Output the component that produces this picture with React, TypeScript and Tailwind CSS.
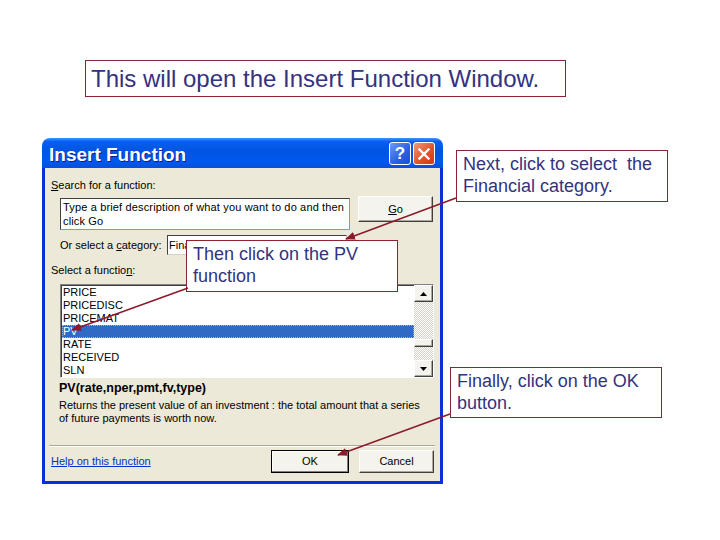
import React from 'react';

const items = ['PRICE', 'PRICEDISC', 'PRICEMAT', 'PV', 'RATE', 'RECEIVED', 'SLN'];

function Callout({ className, children }: { className: string; children: React.ReactNode }) {
  return (
    <div
      className={`absolute bg-white border border-[#8b2332] text-[#33337f] text-[18px] leading-[22px] pl-[6px] pt-[2px] whitespace-pre font-['Liberation_Sans',Arial,sans-serif] ${className}`}
    >
      {children}
    </div>
  );
}

function Btn({ className, children, def }: { className: string; children: React.ReactNode; def?: boolean }) {
  return (
    <div
      className={`flex items-center justify-center bg-[#f4f3ee] text-[11px] text-black ${
        def
          ? 'border border-black shadow-[inset_-1px_-1px_0_#808080,inset_1px_1px_0_#fff]'
          : 'border border-t-white border-l-white border-r-[#404040] border-b-[#404040] shadow-[inset_-1px_-1px_0_#aca899]'
      } ${className}`}
    >
      {children}
    </div>
  );
}

export default function App() {
  return (
    <div className="relative w-[720px] h-[540px] bg-white overflow-hidden font-['Liberation_Sans',Arial,sans-serif]">
      {/* slide caption */}
      <div className="pt-[60px] pl-[85px]">
        <div className="w-[481px] h-[37px] border border-[#8b2332] text-[#33337f] text-[24px] leading-[35px] pl-[5px]">
          This will open the Insert Function Window.
        </div>
      </div>

      {/* Insert Function dialog */}
      <div className="mt-[41px] ml-[42px] w-[401px] rounded-t-[8px] overflow-hidden">
        <div className="h-[30px] flex items-center pl-[7px] pr-[8px] bg-[linear-gradient(to_bottom,#3d95ff_0%,#0a5ef0_12%,#0054e3_45%,#0058ee_80%,#0b4fd8_100%)]">
          <span className="pt-[4px] text-white font-bold text-[19px] [text-shadow:1px_1px_0_#0a1e8c]">
            Insert Function
          </span>
          <div className="ml-auto flex gap-[2px] mt-[1px]">
            <div className="w-[22px] h-[23px] rounded-[3px] border border-white bg-[linear-gradient(135deg,#6a9cf5,#2a5fe0_60%,#1d4fd0)] flex items-center justify-center text-white font-bold text-[17px]">
              ?
            </div>
            <div className="w-[22px] h-[23px] rounded-[3px] border border-white bg-[linear-gradient(135deg,#f09a7e,#e2542a_55%,#cc3a12)] flex items-center justify-center">
              <svg width="12" height="12" viewBox="0 0 12 12">
                <path d="M1.5 1.5 L10.5 10.5 M10.5 1.5 L1.5 10.5" stroke="white" strokeWidth="2.4" strokeLinecap="square" />
              </svg>
            </div>
          </div>
        </div>

        <div className="h-[316px] bg-[#ece9d8] border-x-[3px] border-b-[3px] border-[#0831d9] flex flex-col text-[11px] text-black">
          <div className="mt-[11px] ml-[6px] h-[13px] leading-[13px]">
            <u>S</u>earch for a function:
          </div>

          <div className="mt-[4px] ml-[15px] flex items-start">
            <div className="mt-[2px] w-[290px] h-[32px] bg-white border border-[#7f9db9] border-t-[#404040] border-l-[#404040] pl-[2px] pt-[1px] leading-[14px] tracking-[0.15px]">
              Type a brief description of what you want to do and then
              <br />
              click Go
            </div>
            <Btn className="ml-[8px] w-[75px] h-[26px]">
              <u>G</u>o
            </Btn>
          </div>

          <div className="mt-[5px] ml-[15px] h-[20px] flex items-center">
            <span className="w-[107px]">
              Or select a <u>c</u>ategory:
            </span>
            <div className="w-[180px] h-[20px] bg-white border border-[#404040] border-r-[#d4d0c8] border-b-[#d4d0c8] flex items-center pl-[1px]">
              {/* the rest of the category name lies under the callout */}
              <span className="w-[17px] overflow-hidden whitespace-nowrap">Financial</span>
            </div>
          </div>

          <div className="mt-[9px] ml-[6px] h-[13px] leading-[13px]">
            Select a functio<u>n</u>:
          </div>

          <div className="mt-[7px] ml-[15px] w-[374px] h-[94px] bg-white border border-[#808080] border-r-white border-b-white shadow-[inset_1px_1px_0_#404040] flex">
            <div className="flex-1 pt-[1px] pl-[1px]">
              {items.map((it) => (
                <div
                  key={it}
                  className={`h-[13px] leading-[13px] pl-[1px] ${
                    it === 'PV' ? 'bg-[#316ac5] text-white outline-1 outline-dotted outline-[#9ab6e4] -outline-offset-1' : ''
                  }`}
                >
                  {it}
                </div>
              ))}
            </div>
            <div className="w-[19px] flex flex-col bg-[repeating-conic-gradient(#ffffff_0_25%,#d4d0c8_0_50%)] bg-[length:2px_2px]">
              <Btn className="h-[17px] w-[19px]">
                <svg width="7" height="4" viewBox="0 0 7 4">
                  <path d="M0 4 L3.5 0 L7 4 Z" fill="black" />
                </svg>
              </Btn>
              <div className="flex-1 flex flex-col">
                <div className="h-[37px]" />
                <Btn className="h-[8px] w-[19px]">{null}</Btn>
              </div>
              <Btn className="h-[17px] w-[19px]">
                <svg width="7" height="4" viewBox="0 0 7 4">
                  <path d="M0 0 L3.5 4 L7 0 Z" fill="black" />
                </svg>
              </Btn>
            </div>
          </div>

          <div className="mt-[4px] ml-[14px] h-[13px] leading-[13px] font-bold text-[12.5px]">
            PV(rate,nper,pmt,fv,type)
          </div>
          <div className="mt-[4px] ml-[14px] w-[380px] leading-[13px]">
            Returns the present value of an investment : the total amount that a series
            <br />
            of future payments is worth now.
          </div>

          <div className="mt-[20px] ml-[4px] w-[386px] border-t border-[#aca899] border-b border-b-white" />

          <div className="mt-[3px] h-[23px] flex items-center">
            <span className="ml-[6px] text-[#0033cc] underline">Help on this function</span>
            <Btn def className="ml-auto w-[78px] h-[23px]">
              OK
            </Btn>
            <Btn className="ml-[10px] mr-[6px] w-[75px] h-[23px]">Cancel</Btn>
          </div>
        </div>
      </div>

      {/* callouts */}
      <Callout className="left-[456px] top-[150px] w-[212px] h-[52px]">
        {'Next, click to select  the\nFinancial category.'}
      </Callout>
      <Callout className="left-[186px] top-[240px] w-[212px] h-[52px]">
        {'Then click on the PV\nfunction'}
      </Callout>
      <Callout className="left-[450px] top-[367px] w-[212px] h-[51px]">
        {'Finally, click on the OK\nbutton.'}
      </Callout>

      {/* arrows */}
      <svg className="absolute left-0 top-0 pointer-events-none" width="720" height="540" viewBox="0 0 720 540">
        <defs>
          <marker id="ah" markerWidth="10" markerHeight="8" refX="9" refY="4" orient="auto" markerUnits="userSpaceOnUse">
            <path d="M0 0 L10 4 L0 8 Z" fill="#8b1a2a" />
          </marker>
        </defs>
        <line x1="456" y1="198" x2="346" y2="239" stroke="#8b1a2a" strokeWidth="1.5" markerEnd="url(#ah)" />
        <line x1="188" y1="288" x2="72" y2="330" stroke="#8b1a2a" strokeWidth="1.5" markerEnd="url(#ah)" />
        <line x1="450" y1="414" x2="338" y2="455" stroke="#8b1a2a" strokeWidth="1.5" markerEnd="url(#ah)" />
      </svg>
    </div>
  );
}
